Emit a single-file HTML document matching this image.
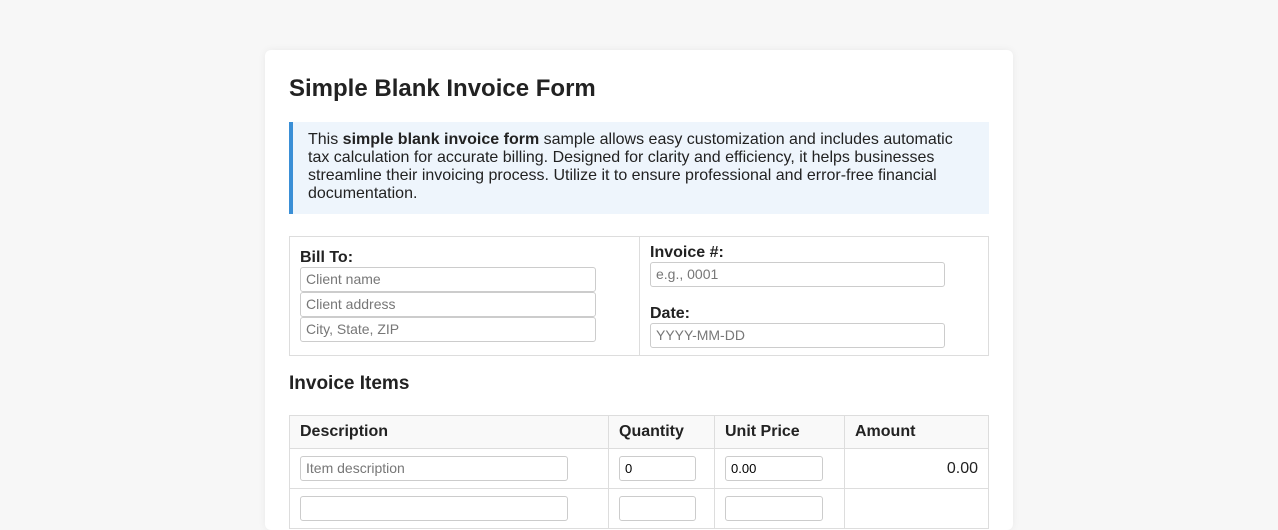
<!DOCTYPE html>
<html><head><style>
*{box-sizing:border-box}
body{margin:0;background:#f7f7f7;font-family:"Liberation Sans",Arial,sans-serif;color:#222;width:1278px;height:501px;overflow:hidden}
.card{position:absolute;left:265px;top:50px;width:748px;height:480px;background:#fff;border-radius:6px;box-shadow:0 0 8px rgba(0,0,0,0.06)}
h1{position:absolute;left:24px;top:25px;margin:0;font-size:24px;font-weight:bold}
.note{position:absolute;left:24px;top:72px;width:700px;height:92px;background:#eef5fc;border-left:4px solid #3a8fd6;padding:9px 15px;font-size:16px;line-height:18px;color:#222}
.box{position:absolute;left:24px;top:186px;width:700px;height:120px;border:1px solid #ddd}
.box .div{position:absolute;left:349px;top:0;bottom:0;border-left:1px solid #ddd}
label{position:absolute;font-weight:bold;font-size:16px}
.in{position:absolute;height:25px;border:1px solid #ccc;border-radius:3px;font-size:14px;color:#777;padding:4px 5px;line-height:15px}
h2{position:absolute;left:24px;top:323px;margin:0;font-size:19px;font-weight:bold}
table{position:absolute;left:24px;top:365px;width:700px;border-collapse:collapse}
td,th{border:1px solid #ddd;font-size:16px;text-align:left;padding:0 10px}
th{background:#f9f9f9;height:33px}
td{height:40px;position:relative}
.s{height:25px;border:1px solid #ccc;border-radius:3px;font-size:14px;padding:4px 5px;line-height:15px;color:#777}
</style></head><body>
<div class="card">
<h1>Simple Blank Invoice Form</h1>
<div class="note">This <b>simple blank invoice form</b> sample allows easy customization and includes automatic tax calculation for accurate billing. Designed for clarity and efficiency, it helps businesses streamline their invoicing process. Utilize it to ensure professional and error-free financial documentation.</div>
<div class="box"><div class="div"></div>
<label style="left:10px;top:12px">Bill To:</label>
<div class="in" style="left:10px;top:30px;width:296px">Client name</div>
<div class="in" style="left:10px;top:55px;width:296px">Client address</div>
<div class="in" style="left:10px;top:80px;width:296px">City, State, ZIP</div>
<label style="left:360px;top:7px">Invoice #:</label>
<div class="in" style="left:360px;top:25px;width:295px">e.g., 0001</div>
<label style="left:360px;top:68px">Date:</label>
<div class="in" style="left:360px;top:86px;width:295px">YYYY-MM-DD</div>
</div>
<h2>Invoice Items</h2>
<table>
<tr><th style="width:319px">Description</th><th style="width:106px">Quantity</th><th style="width:130px">Unit Price</th><th>Amount</th></tr>
<tr><td><div class="s" style="width:268px">Item description</div></td><td><div class="s" style="width:77px;color:#000;font-size:13px">0</div></td><td><div class="s" style="width:98px;color:#000;font-size:13px">0.00</div></td><td style="text-align:right">0.00</td></tr>
<tr><td><div class="s" style="width:268px"></div></td><td><div class="s" style="width:77px"></div></td><td><div class="s" style="width:98px"></div></td><td></td></tr>
</table>
</div>
</body></html>
